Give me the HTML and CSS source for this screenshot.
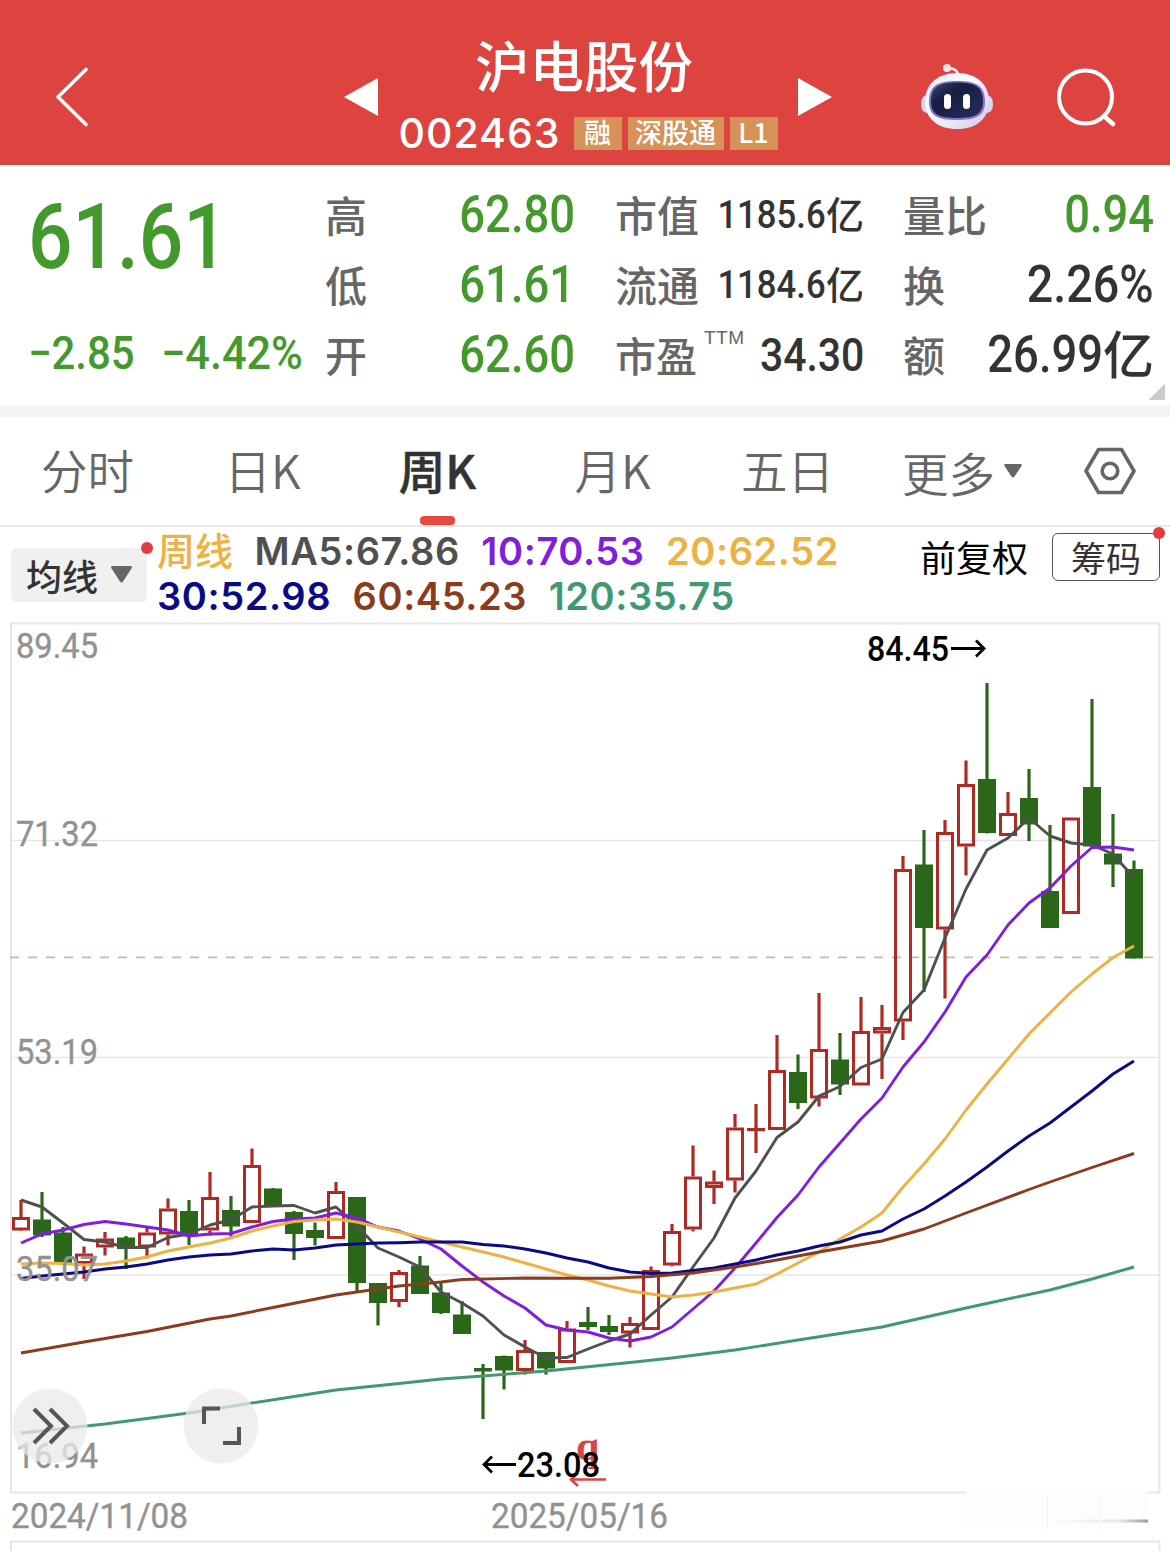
FILE: index.html
```html
<!DOCTYPE html>
<html lang="zh-CN">
<head>
<meta charset="utf-8">
<title>沪电股份 002463</title>
<link rel="stylesheet" href="styles.css">
</head>
<body>
<header class="topbar">
  <svg class="back" width="36" height="62" viewBox="0 0 36 62"><path d="M32 3.500 4 31 32 58.500" fill="none" stroke="#fff" stroke-width="3.600" stroke-linecap="round" stroke-linejoin="round"/></svg>
  <svg class="prev" width="34" height="38" viewBox="0 0 34 38"><path d="M34 0v38L0 19z" fill="#fff"/></svg>
  <div class="stock">
    <h1 class="name">沪电股份</h1>
    <div class="meta"><span class="code">002463</span><span class="tag">融</span><span class="tag tag-wide">深股通</span><span class="tag">L1</span></div>
  </div>
  <svg class="next" width="34" height="38" viewBox="0 0 34 38"><path d="M0 0v38l34-19z" fill="#fff"/></svg>
  <svg class="robot" width="74" height="68" viewBox="0 0 74 68">
    <defs>
      <linearGradient id="shell" x1="0" y1="0" x2="1" y2="1"><stop offset="0" stop-color="#e9e8f2"/><stop offset=".4" stop-color="#fbfaff"/><stop offset="1" stop-color="#cfcbec"/></linearGradient>
      <linearGradient id="rim" x1="0" y1="0" x2="1" y2="1"><stop offset="0" stop-color="#6a78b8"/><stop offset="1" stop-color="#9a6cf0"/></linearGradient>
      <linearGradient id="visor" x1="0" y1="0" x2="1" y2="1"><stop offset="0" stop-color="#3c4668"/><stop offset=".35" stop-color="#171c40"/><stop offset="1" stop-color="#28305a"/></linearGradient>
    </defs>
    <path d="M27 5.500q11-1 11 8" fill="none" stroke="#efeaf4" stroke-width="2.600"/>
    <circle cx="27" cy="5" r="4" fill="#f0e3ea"/>
    <path d="M10 32Q1 31 1 41t9 9zM64 32q9-1 9 9t-9 9z" fill="#d6d4f2"/>
    <path d="M37 10C57 10 69 22 69 38 69 56 56 66 37 66S5 56 5 38C5 22 17 10 37 10z" fill="url(#shell)"/>
    <path d="M37 18c20 0 28 5 28 21 0 14-9 18-28 18S9 53 9 39C9 23 17 18 37 18z" fill="url(#rim)"/>
    <path d="M37 19.500c19 0 26 5 26 19 0 13-8 16.500-26 16.500s-26-3.500-26-16.500c0-14 7-19 26-19z" fill="url(#visor)"/>
    <rect x="24" y="31" width="7" height="15" rx="3.500" fill="#fff"/><rect x="43" y="31" width="7" height="15" rx="3.500" fill="#fff"/>
  </svg>
  <svg class="search" width="62" height="62" viewBox="0 0 62 62"><circle cx="29.500" cy="29" r="26.500" fill="none" stroke="#fff" stroke-width="4"/><path d="m48 48 9 8" stroke="#fff" stroke-width="4.500" stroke-linecap="round"/></svg>
</header>

<section class="quote">
  <div class="price">
    <div class="last"><span class="fig">61.61</span></div>
    <div class="change"><span class="fig chg">−2.85</span><span class="fig pct">−4.42%</span></div>
  </div>
  <div class="col col-a">
    <div class="row"><span class="label">高</span><span class="fig down">62.80</span></div>
    <div class="row"><span class="label">低</span><span class="fig down">61.61</span></div>
    <div class="row"><span class="label">开</span><span class="fig down">62.60</span></div>
  </div>
  <div class="col col-b">
    <div class="row"><span class="label">市值</span><span class="val small"><span class="fig">1185.6</span><span class="unit">亿</span></span></div>
    <div class="row"><span class="label">流通</span><span class="val small"><span class="fig">1184.6</span><span class="unit">亿</span></span></div>
    <div class="row"><span class="label pe">市盈<sup>TTM</sup></span><span class="fig mid">34.30</span></div>
  </div>
  <div class="col col-c">
    <div class="row"><span class="label">量比</span><span class="fig down">0.94</span></div>
    <div class="row"><span class="label">换</span><span class="fig rate">2.26%</span></div>
    <div class="row"><span class="label">额</span><span class="val"><span class="fig">26.99</span><span class="unit">亿</span></span></div>
  </div>
  <i class="corner"></i>
</section>

<nav class="tabs">
  <span class="tab">分时</span><span class="tab">日K</span><span class="tab active">周K</span><span class="tab">月K</span><span class="tab">五日</span>
  <span class="more">更多<svg width="18" height="14" viewBox="0 0 18 14"><path d="M1.500 0h15q2 0 1 2l-7 10.500q-1.500 2-3 0L.5 2q-1-2 1-2z" fill="#666"/></svg></span>
  <svg class="gear" width="52" height="48" viewBox="0 0 52 48"><path d="M14.500 2.500h23L50 24 37.500 45.500h-23L2 24z" fill="none" stroke="#666" stroke-width="3.600" stroke-linejoin="round"/><circle cx="26" cy="24" r="7.800" fill="none" stroke="#666" stroke-width="3.600"/></svg>
</nav>

<section class="averages">
  <button class="picker">均线<svg width="21" height="17" viewBox="0 0 21 17"><path d="M2 0h17q3 0 1.500 2.500l-8.500 13q-1.500 2-3 0L.5 2.500Q-1 0 2 0z" fill="#666"/></svg><i class="dot"></i></button>
  <div class="legend">
    <div class="line"><span class="period">周线</span><span class="ma5">MA5:67.86</span><span class="ma10">10:70.53</span><span class="ma20">20:62.52</span></div>
    <div class="line"><span class="ma30">30:52.98</span><span class="ma60">60:45.23</span><span class="ma120">120:35.75</span></div>
  </div>
  <span class="adjust">前复权</span>
  <button class="chips">筹码<i class="dot"></i></button>
</section>

<main class="chart">
  <svg id="kline" width="1170" height="929" viewBox="0 622 1170 929"></svg>
  <svg class="round fold" width="76" height="76" viewBox="0 0 76 76"><circle cx="38" cy="38" r="37.500"/><path d="m22 21 17 17-17 17M38 21l17 17-17 17"/></svg>
  <svg class="round full" width="76" height="76" viewBox="0 0 76 76"><circle cx="38" cy="38" r="37.500"/><path d="M21 36V20.500h16M40 55h16V39"/></svg>
</main>
<script src="chart.js"></script>
</body>
</html>
```
FILE: styles.css
```css
* { box-sizing: border-box; }
body { margin: 0; width: 1170px; height: 1551px; overflow: hidden; background: #fff; color: #333; font-family: "Noto Sans CJK SC", sans-serif; }
i { font-style: normal; }
button { font: inherit; color: inherit; border: 0; padding: 0; }

.topbar { display: flex; align-items: flex-start; height: 165px; background: #dd4440; color: #fff; }
.back { margin: 66px 0 0 54px; }
.prev { margin: 78px 0 0 254px; }
.stock { width: 420px; height: 165px; display: flex; flex-direction: column; align-items: center; }
.name { margin: 31px 8px 0 0; font-size: 54.5px; line-height: 66px; font-weight: 500; }
.meta { display: flex; align-items: center; height: 34px; margin-top: 19px; gap: 6px; white-space: nowrap; }
.code { width: 169px; margin-left: 0; font: 500 41px/34px Inter, sans-serif; letter-spacing: 1px; }
.tag { width: 48px; height: 33px; background: #d69257; font-size: 27px; line-height: 30px; font-weight: 500; text-align: center; }
.tag-wide { width: 96px; }
.next { margin: 78px 0 0; }
.robot { margin: 63px 0 0 88px; }
.search { margin: 68px 0 0 62px; }

.quote { position: relative; display: flex; height: 252px; padding-top: 15px; border-bottom: 12px solid #f4f4f4; }
.fig { display: inline-block; font-family: Roboto, sans-serif; font-weight: 500; font-size: 51px; line-height: 60px; transform: scaleX(.89); transform-origin: right center; white-space: nowrap; }
.price { width: 325px; padding-left: 28px; color: #43992b; }
.price .fig { transform-origin: left center; }
.last { height: 138px; }
.last .fig { font-size: 90px; line-height: 115px; transform: scaleX(.87); }
.change { display: flex; height: 70px; }
.change .fig { font-size: 46px; line-height: 70px; }
.change .chg { width: 133px; transform: scaleX(.91); }
.change .pct { transform: scaleX(.94); }
.col-a { width: 250px; }
.col-b { width: 249px; margin-left: 40px; }
.col-c { width: 251px; margin-left: 39px; }
.row { display: flex; justify-content: space-between; align-items: center; height: 70px; }
.label { margin-top: -3px; font-size: 42px; line-height: 66px; color: #666; font-weight: 500; white-space: nowrap; }
.down { color: #43992b; }
.rate { transform: scaleX(.915); }
.val { display: flex; align-items: center; font-size: 51px; line-height: 60px; font-weight: 500; }
.unit { padding-bottom: 7px; }
.small { font-size: 38px; }
.small .unit { padding-bottom: 5px; }
.small .fig { font-size: 39px; }
.mid { font-size: 46px; }
.pe { width: 126px; font-size: 41px; }
.pe sup { display: inline-block; margin-left: 7px; font: 400 19px/20px "Liberation Sans", sans-serif; letter-spacing: .5px; vertical-align: 28px; }
.corner { position: absolute; right: 5px; bottom: 5px; width: 16px; height: 16px; background: linear-gradient(135deg, transparent 50%, #ccc 50%); }

.tabs { display: flex; align-items: center; height: 110px; border-bottom: 2px solid #e8e8e8; font-size: 46.5px; color: #666; font-weight: 350; }
.tab { position: relative; width: 175px; height: 108px; line-height: 103px; text-align: center; }
.active { color: #333; font-weight: 500; -webkit-text-stroke: .5px #333; }
.active::after { content: ""; position: absolute; left: 70px; bottom: 0; width: 35px; height: 9px; border-radius: 4px; background: #e64c3e; }
.more { display: flex; align-items: center; gap: 9px; width: 209px; height: 108px; padding-left: 27px; line-height: 103px; }
.more svg { margin-top: 0; }

.averages { display: flex; align-items: flex-start; height: 95px; }
.picker { position: relative; flex: none; display: flex; align-items: center; gap: 13px; width: 136px; height: 54px; margin: 21px 0 0 11px; padding-left: 15px; border-radius: 6px; background: #f0f0f0; font-size: 36px; line-height: 52px; font-weight: 500; white-space: nowrap; }
.picker svg { margin-top: -2px; }
.dot { position: absolute; right: -6px; top: -6px; width: 12px; height: 12px; border-radius: 50%; background: #e23c3e; }
.legend { flex: none; width: 773px; padding: 2px 0 0 10px; font: 600 38px/45px Inter, "Noto Sans CJK SC", sans-serif; letter-spacing: .6px; white-space: nowrap; }
.line { display: flex; gap: 21.5px; height: 45px; }
.period { margin-top: -3px; color: #edb144; font-weight: 500; letter-spacing: 0; font-family: "Noto Sans CJK SC", sans-serif; line-height: 45px; }
.ma5 { color: #505050; }
.ma10 { color: #801edc; }
.ma20 { color: #edb144; }
.ma30 { color: #0a0a87; }
.ma60 { color: #8a3c1c; }
.ma120 { color: #419871; }
.adjust { flex: none; width: 132px; margin-top: 2px; font-size: 36px; line-height: 54px; color: #000; }
.chips { position: relative; flex: none; width: 108px; height: 48px; margin-top: 6px; border: 1.500px solid #555; border-radius: 6px; background: #fff; font-size: 35px; line-height: 42px; }
.chips .dot { top: -7px; }

.chart { position: relative; height: 929px; }
#kline { display: block; }
.axis { font: 400 35px Roboto, sans-serif; fill: #929292; stroke: #929292; stroke-width: .4; }
.axis.mark { font-weight: 500; fill: #000; stroke: none; }
.round { position: absolute; top: 766px; }
.round circle { fill: #e9e9e9; opacity: .75; }
.round path { fill: none; stroke: #555; stroke-width: 4; }
.fold { left: 12px; }
.full { left: 183px; }
```
FILE: chart.js
```js
// Each candle: direction, high, body top, body bottom, low (chart units)
const candles = `r 1200 1217 1230.5 1230
g 1192 1219.5 1235.5 1237
g 1227 1232.5 1263 1263
r 1246.5 1253.5 1264 1279
r 1232 1238.5 1247.5 1255.5
g 1236 1237.5 1249 1269
r 1227.5 1232.5 1247.5 1258.5
r 1198.5 1208.5 1234.5 1245.5
g 1200 1211 1236 1245
r 1172 1197 1230.5 1235.5
g 1196 1210 1226.5 1236.5
r 1148.5 1165 1223 1223
g 1188 1188.5 1206 1206
g 1211 1212 1234 1260
g 1222.5 1230 1238 1245.5
r 1182 1191 1239 1239
g 1197 1197 1283 1291
g 1283 1283 1303 1325.5
r 1270 1272 1302 1307
g 1256 1265.5 1294 1294
g 1282 1292.5 1313 1314
g 1301 1314.5 1334 1334
g 1364 1368 1371.5 1419
g 1355.5 1356 1370.5 1389.5
r 1340 1350 1371 1374.5
g 1352 1352 1368.5 1374.5
r 1321 1328.5 1363 1363
g 1307 1322 1327 1330
g 1315 1326 1332 1335
r 1317 1323 1333.5 1347.5
r 1266.5 1270 1330 1330
r 1224 1231 1265.5 1266.5
r 1145.5 1176.5 1229.5 1231.5
r 1170.5 1181.5 1188 1204
r 1114 1127.5 1180.5 1192.5
r 1104 1128 1131 1153
r 1035 1070 1130 1130
g 1054.5 1072 1103 1109
r 993 1049 1098.5 1106.5
g 1033 1059.5 1084.5 1095
r 997 1031 1085.5 1085.5
r 1005 1027 1033.5 1079
r 856 869 1021.5 1040
g 830 864.5 928 992
r 820 832 929.5 998.5
r 760.5 784 846.5 875.5
g 683 779 833 833.5
r 792 813 836 836
g 769 798 824.5 841
g 825 891 928 928
r 817.5 817.5 914 914
g 699 787 846.5 846.5
g 814 853.5 864.5 887
g 860.5 869 958.5 958.5`.split('\n').map(l => l.split(' '));

const every = s => s.split(' ').map((y, i) => [i, +y]);
const averages = [
  ['#505050', every('1200 1207 1223 1239.5 1242 1247.5 1247.5 1237.5 1234 1225 1220 1207 1206 1205.5 1213 1207 1226 1248 1257 1267 1292 1303 1316 1335 1347 1358 1357.5 1349 1341 1334 1315 1297 1267 1238 1198 1171 1137.5 1122 1096 1086.5 1067.5 1059 1012.5 990 938 889 850 838 818 836 843 845 854 878')],
  ['#801edc', every('1243 1234 1230 1224.5 1221.5 1224 1227 1230 1236 1234 1233.5 1227 1221.5 1219 1218 1213 1218 1227 1231 1239 1249 1266 1282 1296 1308 1325 1330 1332 1338 1341 1337 1327 1309 1291 1268 1243 1217.5 1195 1167 1143 1119 1098 1067 1042 1012 977 955 925 903 888 866 847.5 847 850')],
  ['#edb144', every('1264 1263 1263.5 1265 1264 1261 1257 1251 1247 1243 1238 1231 1226 1221.5 1220 1219 1222 1227 1232 1237 1242 1247 1252 1257 1263 1269 1275 1280 1286 1291 1294 1297 1295 1292 1288 1284 1274 1263 1252 1239 1227 1213 1187 1164 1139 1110 1084 1059 1034 1013 992 974 957.5 946')],
  ['#0a0a87', every('1278.5 1276 1274 1272 1269 1267 1264 1260 1257 1255 1254 1251 1249 1250 1248 1245 1244 1243 1242.7 1242 1242 1242 1244.5 1246 1249 1253 1258 1262 1268 1272 1273.5 1273 1270.5 1268 1264 1260 1255 1251 1246 1242 1235 1231 1219 1209 1196 1182 1167 1151 1136 1123 1107 1091 1074 1061')],
  ['#8a3c1c', [[0,1353],[3,1342],[6,1331.5],[9,1319],[10,1316],[12,1307.5],[15,1295],[16,1292],[18,1286],[20,1282],[21,1279.5],[24,1278],[26,1278.3],[28,1278.3],[30,1276.5],[32,1273],[34,1267],[36,1260],[38,1252],[41,1241],[43,1229],[45,1213],[48,1189.5],[49,1182],[51,1167.5],[53,1153.5]]],
  ['#419871', [[0,1433],[4,1424],[8,1413],[11,1403],[15,1390],[18,1383.5],[20,1379],[22,1376],[25,1371],[29,1362.500],[31,1358],[34,1350],[37,1340],[41,1327],[45,1308],[49,1290],[51,1279],[53,1267]]]
];

const x = i => 21 + 21 * i;
let out = '<g fill="none" stroke="#e6e6e6" stroke-width="2"><path d="M11 623.500H1159.500V1492.500H11z"/><path d="M11 840.500H1159M11 1057.500H1159M11 1275H1159" stroke-width="1.600"/><path d="M11 1560V1541.500H1159.500V1560"/></g>';
out += '<path d="M10 957.300H1154" stroke="#cdbb91" stroke-width="1.800" stroke-dasharray="9 9"/>';
candles.forEach(([dir, high, top, bottom, low], i) => {
  const c = x(i);
  if (dir === 'g') {
    out += `<path d="M${c} ${high}V${low}" stroke="#2a6718" stroke-width="3.200"/><rect x="${c - 9}" y="${top}" width="18" height="${bottom - top}" fill="#2a6718"/>`;
  } else {
    const inner = Math.max(bottom - top - 3, .1);
    out += `<path d="M${c} ${high}V${top}M${c} ${bottom}V${low}" stroke="#b02a24" stroke-width="3.200"/><rect x="${c - 7.5}" y="${+top + 1.5}" width="15" height="${inner}" fill="none" stroke="#b02a24" stroke-width="3"/>`;
  }
});
averages.forEach(([color, pts]) => {
  out += `<polyline fill="none" stroke="${color}" stroke-width="2.900" stroke-linejoin="round" points="${pts.map(([i, y]) => x(i) + ',' + y).join(' ')}"/>`;
});
const label = (s, left, base, width, cls = '') => `<text class="axis ${cls}" x="${left}" y="${base}" textLength="${width}" lengthAdjust="spacingAndGlyphs">${s}</text>`;
out += label('89.45', 16, 658, 82) + label('71.32', 16, 846, 82) + label('53.19', 16, 1063.5, 82) + label('35.07', 16, 1280.5, 82) + label('16.94', 16, 1468, 82);
out += label('2024/11/08', 11, 1528, 177) + label('2025/05/16', 491, 1528, 177);
out += '<text x="576" y="1460" font-family="Liberation Serif" font-weight="700" font-size="42" fill="#d94542">q</text><path d="M606 1479.500H571M578 1473l-7 6.500 7 6.500" fill="none" stroke="#d94542" stroke-width="2.600"/>';
out += label('84.45', 867, 661, 82, 'mark') + label('23.08', 517, 1477, 83, 'mark');
out += '<path d="M951 648.500H984M976 640.500l8 8-8 8M516 1464.500H484M492 1456.500l-8 8 8 8" fill="none" stroke="#000" stroke-width="2.800"/>';
out += '<defs><linearGradient id="fade"><stop offset="0" stop-color="#aaa" stop-opacity="0"/><stop offset=".7" stop-color="#aaa" stop-opacity=".25"/><stop offset="1" stop-color="#999"/></linearGradient></defs><rect x="966" y="1490" width="182" height="38" fill="#fdfdfd"/><rect x="1048" y="1519.500" width="100" height="3" fill="url(#fade)"/><path d="M1047 1496v34M1099 1496v34" stroke="#f8f8f8" stroke-width="2"/>';
document.getElementById('kline').innerHTML = out;
```
